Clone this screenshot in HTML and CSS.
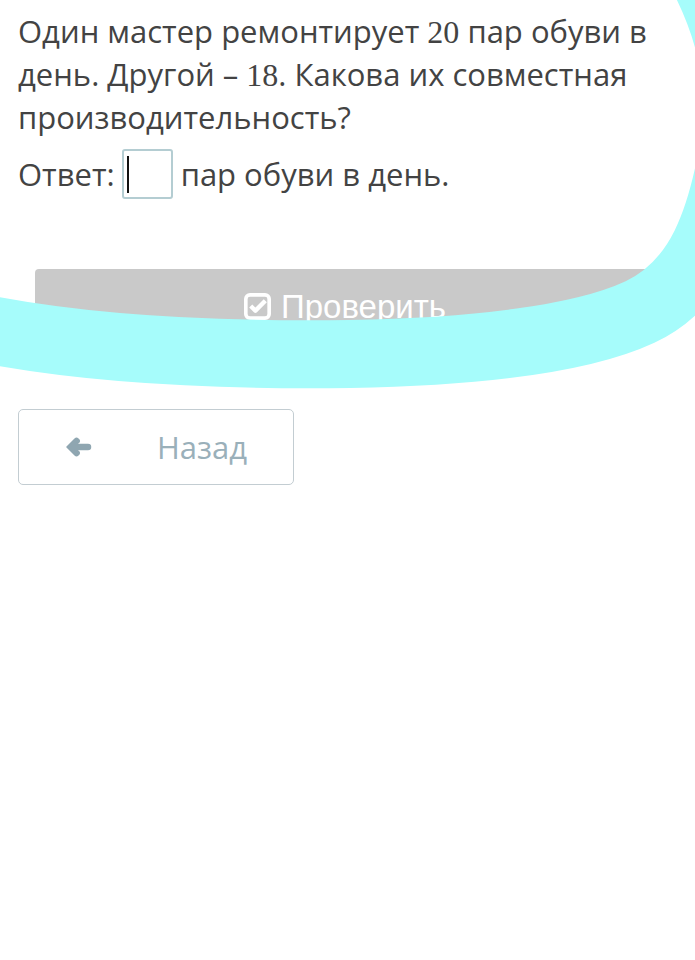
FILE: index.html
```html
<!DOCTYPE html>
<html lang="ru">
<head>
  <meta charset="UTF-8">
  <meta name="viewport" content="width=device-width, initial-scale=1.0">
  <title>Задание</title>
  <link rel="stylesheet" href="styles.css">
</head>
<body>
  <div class="page">
    <!-- Условие задачи -->
    <p class="task">Один мастер ремонтирует <span class="num">20</span> пар обуви в день. Другой – <span class="num">18</span>. Какова их совместная производительность?</p>

    <!-- Строка ответа с полем ввода -->
    <div class="answer">
      <span>Ответ:</span>
      <span class="field"><span class="caret"></span></span>
      <span>пар обуви в день.</span>
    </div>

    <div class="check-btn">
      <svg class="check-icon" viewBox="0 0 26 26" width="27" height="27">
        <rect x="1.75" y="1.75" width="22.5" height="22.5" rx="4" fill="none" stroke="#fff" stroke-width="3.5"/>
        <path d="M6.5 12.5 L11 17 L20.5 7.5" fill="none" stroke="#fff" stroke-width="4.2" stroke-linejoin="round"/>
      </svg>
      <span>Проверить</span>
    </div>

    <div class="back-btn">
      <svg class="back-icon" viewBox="0 0 28 24" width="28" height="24">
        <path d="M3 12 L11 4 Q12.5 2.6 14 4 L14.6 4.6 Q16 6 14.6 7.4 L11.5 9.5 L24 9.5 Q26.5 9.5 26.5 12 Q26.5 14.5 24 14.5 L11.5 14.5 L14.6 16.6 Q16 18 14.6 19.4 L14 20 Q12.5 21.4 11 20 Z" fill="#8fa6b1" stroke="#8fa6b1" stroke-width="1.5" stroke-linejoin="round"/>
      </svg>
      <span class="back-text">Назад</span>
    </div>

    <!-- Пометка маркером поверх страницы -->
    <svg class="scribble" viewBox="0 0 695 960" width="695" height="960">
      <path d="M-20 328 C 80 348, 200 356, 350 354 C 470 352, 580 340, 640 312 C 700 284, 722 220, 735 140 C 742 80, 730 30, 705 -20" fill="none" stroke="#a6fcfb" stroke-width="68" stroke-linecap="round"/>
    </svg>
  </div>
</body>
</html>
```

FILE: styles.css
```css
* { box-sizing: border-box; }
html, body {
  margin: 0; padding: 0;
  background: #fff;
}
body {
  font-family: "Open Sans", "Noto Sans", sans-serif;
  color: #434343;
  width: 695px;
  height: 960px;
  overflow: hidden;
}
.page {
  position: relative;
  height: 100%;
  padding: 10px 18px 0 18px;
}
.task {
  margin: 0;
  font-size: 31px;
  line-height: 42px;
}
.num {
  font-family: "Liberation Serif", "DejaVu Serif", serif;
  font-size: 32px;
}
.answer {
  display: flex;
  align-items: center;
  gap: 8px;
  margin-top: 11px;
  font-size: 31px;
  line-height: 42px;
}
.field {
  display: flex;
  align-items: center;
  width: 51px;
  height: 50px;
  margin-left: -1px;
  border: 2px solid #b4cdd2;
  border-radius: 3px;
  padding-left: 3px;
}
.caret {
  width: 2px;
  height: 37px;
  background: #111;
}
.check-btn {
  display: flex;
  align-items: center;
  justify-content: center;
  gap: 10px;
  margin: 70px 22px 0 17px;
  height: 72px;
  padding-top: 3px;
  background: #c9c9c9;
  border-radius: 4px;
  color: #fff;
  font-family: "Liberation Sans", Arial, sans-serif;
  font-size: 33px;
}
.check-icon { flex: none; }
.back-btn {
  display: flex;
  align-items: center;
  width: 276px;
  height: 76px;
  margin-top: 68px;
  padding-left: 45px;
  border: 1px solid #c3cdd2;
  border-radius: 5px;
  color: #9ab0ba;
  font-size: 31px;
}
.back-text {
  margin-left: 65px;
}
.scribble {
  position: absolute;
  left: 0;
  top: 0;
  pointer-events: none;
}
```
